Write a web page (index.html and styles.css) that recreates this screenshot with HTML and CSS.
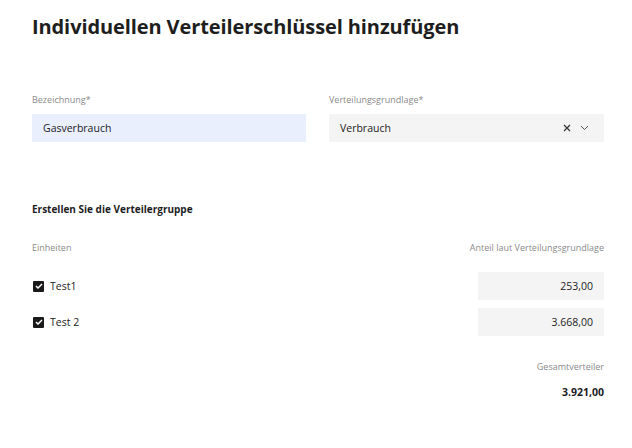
FILE: index.html
```html
<!DOCTYPE html>
<html lang="de">
<head>
<meta charset="utf-8">
<title>Individuellen Verteilerschlüssel hinzufügen</title>
<link rel="stylesheet" href="styles.css">
</head>
<body>
<main class="page">
  <h1 class="title">Individuellen Verteilerschlüssel hinzufügen</h1>

  <div class="fields">
    <div class="field">
      <label class="label">Bezeichnung*</label>
      <div class="input input-active">Gasverbrauch</div>
    </div>
    <div class="field">
      <label class="label">Verteilungsgrundlage*</label>
      <div class="input select">
        <span>Verbrauch</span>
        <span class="select-icons">
          <svg class="icon" width="8" height="8" viewBox="0 0 8 8"><path d="M1 1L7 7M7 1L1 7" stroke="#333" stroke-width="1.2" fill="none"/></svg>
          <svg class="icon" width="9" height="6" viewBox="0 0 9 6"><path d="M1 1L4.5 4.5L8 1" stroke="#555" stroke-width="1" fill="none"/></svg>
        </span>
      </div>
    </div>
  </div>

  <h2 class="section-title">Erstellen Sie die Verteilergruppe</h2>

  <div class="table-head">
    <span class="label">Einheiten</span>
    <span class="label">Anteil laut Verteilungsgrundlage</span>
  </div>

  <div class="rows">
    <div class="row">
      <label class="check">
        <span class="box"><svg width="8" height="6" viewBox="0 0 8 6"><path d="M1 3L3 5L7 1" stroke="#fff" stroke-width="1.5" fill="none"/></svg></span>
        Test1
      </label>
      <div class="input number">253,00</div>
    </div>
    <div class="row">
      <label class="check">
        <span class="box"><svg width="8" height="6" viewBox="0 0 8 6"><path d="M1 3L3 5L7 1" stroke="#fff" stroke-width="1.5" fill="none"/></svg></span>
        Test 2
      </label>
      <div class="input number">3.668,00</div>
    </div>
  </div>

  <div class="total">
    <span class="label">Gesamtverteiler</span>
    <span class="total-value">3.921,00</span>
  </div>
</main>
</body>
</html>
```
FILE: styles.css
```css
* { box-sizing: border-box; }

html, body {
  margin: 0;
  background: #fff;
}

body {
  font-family: "Open Sans", "Liberation Sans", sans-serif;
  color: #1d1d1f;
}

.page {
  width: 632px;
  padding: 12px 28px 0 32px;
}

.title {
  margin: 0;
  font-size: 20px;
  font-weight: 700;
  line-height: 30px;
  color: #1e1e20;
  letter-spacing: -0.1px;
}

.fields {
  display: grid;
  grid-template-columns: 274px 275px;
  column-gap: 23px;
  margin-top: 52px;
}

.field {
  display: flex;
  flex-direction: column;
}

.label {
  font-size: 9px;
  line-height: 12px;
  color: #8a8a8a;
}

.field .label {
  margin-bottom: 8px;
}

.input {
  height: 28px;
  background: #f4f4f5;
  font-size: 10.5px;
  color: #222;
  display: flex;
  align-items: center;
  padding: 0 11px;
}

.input-active {
  background: #e9effc;
}

.select {
  justify-content: space-between;
}

.select-icons {
  display: flex;
  align-items: center;
  gap: 9px;
  padding-right: 4px;
}

.section-title {
  margin: 60px 0 0;
  font-size: 10px;
  font-weight: 700;
  line-height: 14px;
  color: #1d1d1f;
}

.table-head {
  display: flex;
  justify-content: space-between;
  margin-top: 26px;
}

.rows {
  display: flex;
  flex-direction: column;
  gap: 8px;
  margin-top: 18px;
}

.row {
  display: flex;
  justify-content: space-between;
  align-items: center;
}

.check {
  display: flex;
  align-items: center;
  gap: 6px;
  font-size: 10.5px;
  color: #222;
  padding-left: 1px;
}

.box {
  width: 11px;
  height: 11px;
  background: #1a1a1a;
  border-radius: 1px;
  display: flex;
  align-items: center;
  justify-content: center;
}

.number {
  width: 126px;
  justify-content: flex-end;
}

.total {
  display: flex;
  flex-direction: column;
  align-items: flex-end;
  margin-top: 25px;
  gap: 12px;
}

.total-value {
  font-size: 10.5px;
  font-weight: 700;
  color: #1d1d1f;
}
```
